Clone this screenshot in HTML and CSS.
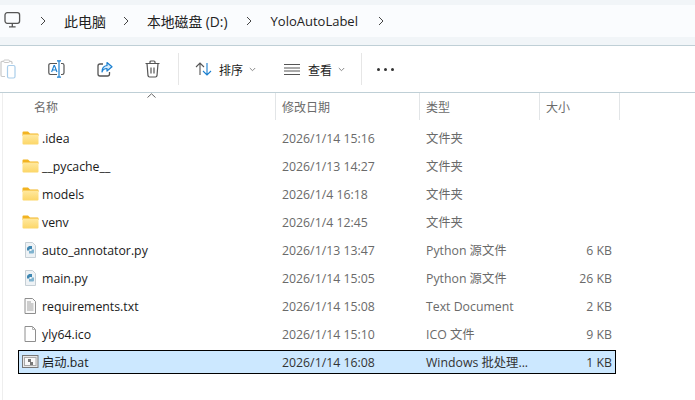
FILE: index.html
```html
<!DOCTYPE html>
<html lang="zh-CN">
<head>
<meta charset="utf-8">
<title>YoloAutoLabel</title>
<link rel="stylesheet" href="styles.css">
</head>
<body>
<div class="window">
  <div class="address-band">
    <nav class="address">
      <svg class="pc-icon" width="18" height="18" viewBox="0 0 18 18" fill="none" stroke="#555" stroke-width="1.3"><rect x="1" y="1.7" width="14.6" height="10.6" rx="2.2"/><path d="M8.3 12.5v3M5 15.8h6.6" /></svg>
      <svg class="chev first" width="6" height="10" viewBox="0 0 6 10" fill="none" stroke="#444" stroke-width="1"><path d="M1 1l4 4-4 4"/></svg>
      <span class="crumb c1">此电脑</span>
      <svg class="chev" width="6" height="10" viewBox="0 0 6 10" fill="none" stroke="#444" stroke-width="1"><path d="M1 1l4 4-4 4"/></svg>
      <span class="crumb c2">本地磁盘 (D:)</span>
      <svg class="chev" width="6" height="10" viewBox="0 0 6 10" fill="none" stroke="#444" stroke-width="1"><path d="M1 1l4 4-4 4"/></svg>
      <span class="crumb c3">YoloAutoLabel</span>
      <svg class="chev" width="6" height="10" viewBox="0 0 6 10" fill="none" stroke="#444" stroke-width="1"><path d="M1 1l4 4-4 4"/></svg>
    </nav>
  </div>

  <div class="toolbar">
    <svg class="tb paste" width="16" height="20" viewBox="0 0 16 20" fill="none"><path d="M5 17.5H2.2A1.2 1.2 0 0 1 1 16.300V3.500A1.200 1.200 0 0 1 2.200 2.300H10.800A1.200 1.200 0 0 1 12 3.500V5" stroke="#c9c9c9" stroke-width="1.200"/><rect x="3.800" y="1" width="5.600" height="2.500" rx=".8" fill="#fff" stroke="#c9c9c9"/><rect x="7.500" y="6.500" width="7.500" height="12.500" rx="1.500" stroke="#a9cdea" stroke-width="1.200"/></svg>
    <svg class="tb rename" width="17" height="18" viewBox="0 0 17 18" fill="none"><path d="M9 3.500H2.500A1.700 1.700 0 0 0 .8 5.200v7.600a1.700 1.700 0 0 0 1.700 1.700H9M13 3.500h1.300A1.700 1.700 0 0 1 16 5.200v7.600a1.700 1.700 0 0 1-1.700 1.700H13" stroke="#555" stroke-width="1.200"/><path d="M3.600 12L6 5.500h.5L9 12M4.500 10h3.600" stroke="#1a7fd0" stroke-width="1.100"/><path d="M11 1v16M9 .8h4M9 17.200h4" stroke="#1a7fd0" stroke-width="1.200"/></svg>
    <svg class="tb share" width="16" height="16" viewBox="0 0 16 16" fill="none"><path d="M6 3H3A2 2 0 0 0 1 5v8a2 2 0 0 0 2 2h7.500a2 2 0 0 0 2-2v-2" stroke="#555" stroke-width="1.300"/><path d="M10 1.500l5 4.300-5 4.200V7.500C7.500 7.500 5.800 8.500 5 11c0-3.800 2-6.200 5-6.500z" fill="#d7ebfa" stroke="#1a7fd0" stroke-width="1.200" stroke-linejoin="round"/></svg>
    <svg class="tb trash" width="15" height="18" viewBox="0 0 15 18" fill="none" stroke="#555" stroke-width="1.200"><path d="M.5 3.500h14M5 3.300V2a1 1 0 0 1 1-1h3a1 1 0 0 1 1 1v1.300M2 3.500l1 12.200a1.500 1.500 0 0 0 1.500 1.300h6a1.500 1.500 0 0 0 1.500-1.300l1-12.200M6 7.500v6M9 7.500v6"/></svg>
    <span class="tb-sep"></span>
    <svg class="sort-icon" width="17" height="14" viewBox="0 0 17 14" fill="none" stroke-width="1.100"><path d="M5 13V1M1 5l4-4 4 4" stroke="#555"/><path d="M12 1v12M8 9l4 4 4-4" stroke="#1a7fd0"/></svg>
    <span class="tb-label sort-label">排序</span>
    <svg class="caret" width="7" height="5" viewBox="0 0 7 5" fill="none" stroke="#888"><path d="M.8 1l2.700 2.700L6.200 1"/></svg>
    <svg class="view-icon" width="16" height="11" viewBox="0 0 16 11" fill="none" stroke="#555"><path d="M0 .5h16M0 4h16M0 7h16M0 10.500h16"/></svg>
    <span class="tb-label view-label">查看</span>
    <svg class="caret" width="7" height="5" viewBox="0 0 7 5" fill="none" stroke="#888"><path d="M.8 1l2.700 2.700L6.200 1"/></svg>
    <span class="tb-sep sep2"></span>
    <span class="more"><i></i><i></i><i></i></span>
  </div>

  <div class="list">
    <div class="head">
      <span class="h-name">名称<svg class="sort-up" width="9" height="5" viewBox="0 0 9 5" fill="none" stroke="#666"><path d="M.5 4.500l4-3.700 4 3.700"/></svg></span>
      <span class="h-cell">修改日期</span>
      <span class="h-cell">类型</span>
      <span class="h-cell">大小</span>
      <span class="h-cell h-last"></span>
    </div>

    <div class="row"><span class="name"><svg class="ficon" width="17" height="14" viewBox="0 0 17 14"><use href="#folder"/></svg>.idea</span><span>2026/1/14 15:16</span><span>文件夹</span><span class="size"></span></div>
    <div class="row"><span class="name"><svg class="ficon" width="17" height="14" viewBox="0 0 17 14"><use href="#folder"/></svg>__pycache__</span><span>2026/1/13 14:27</span><span>文件夹</span><span class="size"></span></div>
    <div class="row"><span class="name"><svg class="ficon" width="17" height="14" viewBox="0 0 17 14"><use href="#folder"/></svg>models</span><span>2026/1/4 16:18</span><span>文件夹</span><span class="size"></span></div>
    <div class="row"><span class="name"><svg class="ficon" width="17" height="14" viewBox="0 0 17 14"><use href="#folder"/></svg>venv</span><span>2026/1/4 12:45</span><span>文件夹</span><span class="size"></span></div>
    <div class="row"><span class="name"><svg class="ficon" width="17" height="16" viewBox="0 0 17 16"><use href="#py"/></svg>auto_annotator.py</span><span>2026/1/13 13:47</span><span>Python 源文件</span><span class="size">6 KB</span></div>
    <div class="row"><span class="name"><svg class="ficon" width="17" height="16" viewBox="0 0 17 16"><use href="#py"/></svg>main.py</span><span>2026/1/14 15:05</span><span>Python 源文件</span><span class="size">26 KB</span></div>
    <div class="row"><span class="name"><svg class="ficon" width="17" height="16" viewBox="0 0 17 16"><use href="#txt"/></svg>requirements.txt</span><span>2026/1/14 15:08</span><span>Text Document</span><span class="size">2 KB</span></div>
    <div class="row"><span class="name"><svg class="ficon" width="17" height="16" viewBox="0 0 17 16"><use href="#blank"/></svg>yly64.ico</span><span>2026/1/14 15:10</span><span>ICO 文件</span><span class="size">9 KB</span></div>
    <div class="row selected"><span class="name"><svg class="ficon" width="17" height="16" viewBox="0 0 17 16"><use href="#bat"/></svg>启动.bat</span><span>2026/1/14 16:08</span><span>Windows 批处理...</span><span class="size">1 KB</span></div>
  </div>
</div>

<svg class="defs" width="0" height="0">
  <defs>
    <linearGradient id="fg" x1="0" y1="0" x2="0" y2="1"><stop offset="0" stop-color="#ffe9a0"/><stop offset="1" stop-color="#fcd667"/></linearGradient>
    <symbol id="folder" viewBox="0 0 17 14"><path d="M.5 1.500A1 1 0 0 1 1.500.5h4.500l2 2h7.500a1 1 0 0 1 1 1V5H.5z" fill="#f2b320"/><rect x=".5" y="3.500" width="16" height="10" rx="1" fill="url(#fg)"/></symbol>
    <symbol id="py" viewBox="0 0 17 16"><path d="M3.500.5h7l3 3v12h-10z" fill="#eef2f5" stroke="#c6cfd5"/><path d="M6.500 4h3.500v3H7.500v1.500H5V6.500c0-1 .5-1.500 1.500-1.500z" fill="#3f87b2"/><path d="M10.500 11.500H7v-2.500h2.500V7.500H12v2.500c0 1-.5 1.500-1.500 1.500z" fill="#7fb3cf"/></symbol>
    <symbol id="txt" viewBox="0 0 17 16"><path d="M3 .5h7.500l3 3v12H3z" fill="#fafafa" stroke="#8e8e8e"/><path d="M5 4h4M5 6h6.500M5 8h6.500M5 10h6.500M5 12h6.500" stroke="#a0a0a0"/></symbol>
    <symbol id="blank" viewBox="0 0 17 16"><path d="M3 .5h7.500l3 3v12H3z" fill="#fff" stroke="#8e8e8e"/><path d="M10.500.5v3h3" fill="none" stroke="#b5b5b5"/></symbol>
    <symbol id="bat" viewBox="0 0 17 16"><rect x=".5" y="1.500" width="15.500" height="12" fill="#e8e8e8" stroke="#777"/><rect x="2.500" y="3.500" width="11.500" height="8" fill="#f9f9f9" stroke="#aaa"/><path d="M6 5h3v3H6zM8 8h3v3H8z" fill="#777"/></symbol>
  </defs>
</svg>
</body>
</html>
```

FILE: styles.css
```css
* {
  box-sizing: border-box;
}

html,
body {
  margin: 0;
  height: 100%;
  background: #fff;
  overflow: hidden;
}

body {
  font-family: "Open Sans", "Noto Sans CJK SC", sans-serif;
  font-size: 12.3px;
}

.window {
  display: flex;
  flex-direction: column;
  height: 400px;
}

.defs {
  position: absolute;
}

.address-band {
  height: 46px;
  padding: 5px 0 8px;
  background: #f1f5f8;
  border-bottom: 1px solid #bfcfd6;
}

.address {
  display: flex;
  align-items: center;
  height: 32px;
  padding-left: 4px;
  background: #fafcfe;
  color: #222;
  font-size: 13px;
}

.pc-icon {
  margin-top: -2px;
}

.chev {
  flex: none;
}

.chev.first {
  margin-left: 18px;
}

.crumb {
  margin: 0 18px;
}

.crumb.c1 {
  font-size: 14px;
  margin-left: 18px;
  margin-right: 17px;
}

.crumb.c2 {
  font-size: 13.8px;
}

.crumb.c3 {
  margin-left: 19px;
  margin-right: 20px;
}

.toolbar {
  display: flex;
  align-items: center;
  height: 47px;
  border-bottom: 1px solid #bfcfd6;
  color: #222;
}

.tb {
  flex: none;
}

.paste {
  margin-left: 0;
}

.rename {
  margin-left: 32px;
}

.share {
  margin-left: 32px;
}

.trash {
  margin-left: 32px;
}

.tb-sep {
  width: 1px;
  height: 32px;
  margin-left: 18px;
  background: #e6e6e6;
}

.sort-icon {
  margin-left: 16px;
}

.tb-label {
  font-family: "Noto Sans CJK SC", sans-serif;
  font-size: 12px;
}

.sort-label {
  margin-left: 7px;
}

.caret {
  margin-left: 6px;
}

.view-icon {
  margin-left: 28px;
}

.view-label {
  margin-left: 8px;
}

.sep2 {
  margin-left: 16px;
}

.more {
  display: flex;
  gap: 4px;
  margin-left: 15px;
}

.more i {
  width: 3px;
  height: 3px;
  border-radius: 50%;
  background: #333;
}

.list {
  flex: 1;
  margin-left: 2px;
  border-left: 1px solid #eeeeee;
}

.head {
  display: grid;
  grid-template-columns: 272px 144px 120px 80px 1px;
  height: 27px;
  color: #6b6b6b;
  font-family: "Noto Sans CJK SC", sans-serif;
  font-size: 12px;
}

.h-name {
  position: relative;
  padding: 5px 0 0 31px;
}

.sort-up {
  position: absolute;
  top: 0;
  left: 144px;
}

.h-cell {
  padding: 5px 0 0 6px;
  border-left: 1px solid #e2e5e7;
}

.h-last {
  padding: 0;
}

.row {
  display: grid;
  grid-template-columns: 263px 144px 120px 66px;
  align-items: center;
  width: 598px;
  height: 24px;
  margin: 0 0 4px 15px;
  padding-right: 3px;
  color: #6a6a6a;
  border: 1px solid transparent;
  white-space: nowrap;
}

.head + .row {
  margin-top: 6px;
}

.name {
  display: flex;
  align-items: center;
  gap: 3px;
  padding-left: 3px;
  color: #1a1a1a;
}

.ficon {
  flex: none;
}

.size {
  text-align: right;
}

.selected {
  background: #cce8ff;
  border-color: #000;
  color: #333;
}
```
